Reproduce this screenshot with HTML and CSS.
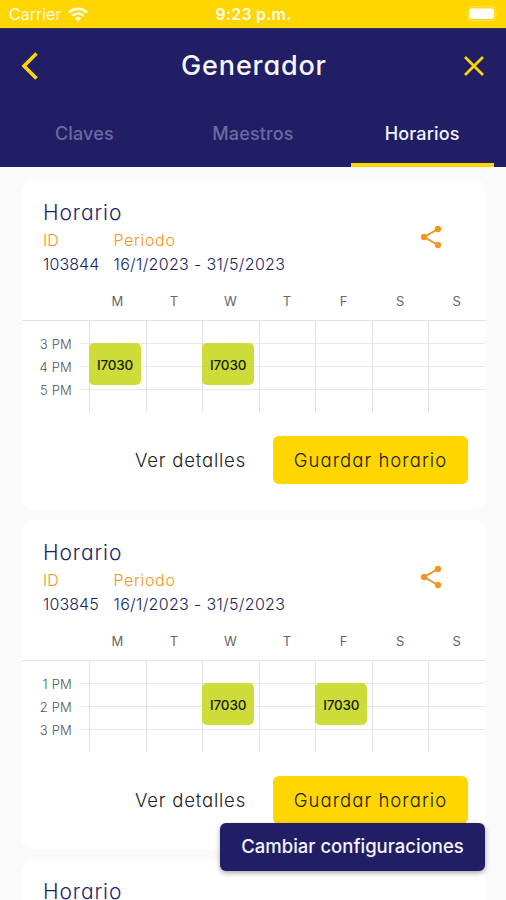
FILE: index.html
```html
<!DOCTYPE html>
<html lang="es">
<head>
<meta charset="utf-8">
<title>Generador</title>
<link rel="stylesheet" href="styles.css">
</head>
<body>
<div class="status">
  <span class="carrier">Carrier</span>
  <svg class="wifi" width="20" height="15" viewBox="0 0 20 15" fill="none" stroke="#fffbe6" stroke-width="2.7"><path d="M1 5.6a12.7 12.7 0 0 1 18 0M4.2 8.9a8.2 8.2 0 0 1 11.6 0"/><path d="M10 14.6l-3.3-3.4a4.7 4.7 0 0 1 6.6 0z" fill="#fffbe6" stroke="none"/></svg>
  <span class="time">9:23 p.m.</span>
  <svg class="battery" width="33" height="16" viewBox="0 0 33 16"><rect x="1.200" y=".7" width="28.600" height="14.100" rx="4.5" fill="none" stroke="#ffe660"/><rect x="3" y="2.5" width="25" height="10.5" rx="2.5" fill="#fff"/><path d="M31 5.200q2 2.500 0 5z" fill="#ffe660"/></svg>
</div>
<header class="header">
  <div class="bar">
    <svg width="20" height="28" viewBox="0 0 20 28" fill="none" stroke="#ffd600" stroke-width="3.6"><path d="M16.500 1.500L4 14l12.500 12.500"/></svg>
    <h1 class="title">Generador</h1>
    <svg width="20" height="20" viewBox="0 0 20 20" fill="none" stroke="#ffd600" stroke-width="2.700"><path d="M1 1l18 18M19 1L1 19"/></svg>
  </div>
  <nav class="tabs">
    <div class="tab"><span>Claves</span></div>
    <div class="tab"><span>Maestros</span></div>
    <div class="tab active"><span>Horarios</span></div>
  </nav>
</header>
<main class="list">
  <section class="card">
    <div class="info">
      <div>
        <h2 class="name">Horario</h2>
        <div class="meta"><span class="label">ID</span><span class="label period-label">Periodo</span><span class="value">103844</span><span class="value period">16/1/2023 - 31/5/2023</span></div>
      </div>
      <svg class="share" width="22" height="24" viewBox="0 0 22 24" fill="#f7941d" stroke="#f7941d"><path d="M18 4L4 12l14 8" fill="none" stroke-width="2"/><circle cx="18" cy="4" r="2.800"/><circle cx="4" cy="12" r="2.800"/><circle cx="18" cy="20" r="2.800"/></svg>
    </div>
    <div class="days"><i></i><span>M</span><span>T</span><span>W</span><span>T</span><span>F</span><span>S</span><span>S</span></div>
    <div class="schedule">
      <div class="hours"><span>3 PM</span><span>4 PM</span><span>5 PM</span></div>
      <div class="lines"><i></i><i></i><i></i></div>
      <div class="col"><b class="event">I7030</b></div><div class="col"></div><div class="col"><b class="event">I7030</b></div><div class="col"></div><div class="col"></div><div class="col"></div><div class="col"></div>
    </div>
    <div class="actions"><span class="details">Ver detalles</span><span class="save"><span>Guardar horario</span></span></div>
  </section>
  <section class="card">
    <div class="info">
      <div>
        <h2 class="name">Horario</h2>
        <div class="meta"><span class="label">ID</span><span class="label period-label">Periodo</span><span class="value">103845</span><span class="value period">16/1/2023 - 31/5/2023</span></div>
      </div>
      <svg class="share" width="22" height="24" viewBox="0 0 22 24" fill="#f7941d" stroke="#f7941d"><path d="M18 4L4 12l14 8" fill="none" stroke-width="2"/><circle cx="18" cy="4" r="2.800"/><circle cx="4" cy="12" r="2.800"/><circle cx="18" cy="20" r="2.800"/></svg>
    </div>
    <div class="days"><i></i><span>M</span><span>T</span><span>W</span><span>T</span><span>F</span><span>S</span><span>S</span></div>
    <div class="schedule">
      <div class="hours"><span>1 PM</span><span>2 PM</span><span>3 PM</span></div>
      <div class="lines"><i></i><i></i><i></i></div>
      <div class="col"></div><div class="col"></div><div class="col"><b class="event">I7030</b></div><div class="col"></div><div class="col"><b class="event">I7030</b></div><div class="col"></div><div class="col"></div>
    </div>
    <div class="actions"><span class="details">Ver detalles</span><span class="save"><span>Guardar horario</span></span></div>
  </section>
  <section class="card partial">
    <h2 class="name">Horario</h2>
  </section>
</main>
<div class="fab"><span>Cambiar configuraciones</span></div>
</body>
</html>
```
FILE: styles.css
```css
* { box-sizing: border-box; }
body { margin: 0; height: 900px; overflow: hidden; position: relative; background: #fafafa; font-family: Inter, "Liberation Sans", sans-serif; display: flex; flex-direction: column; white-space: nowrap; }
svg { display: block; flex: none; }
.status { height: 28px; flex: none; background: #ffd600; color: #fffbe6; display: grid; grid-template-columns: 60px 1fr auto 1fr 33px; align-items: center; padding: 0 7px 0 9px; font-size: 16px; line-height: 28px; }
.carrier { letter-spacing: 0; }
.wifi { margin-left: -1px; }
.time { grid-column: 3; font-weight: 600; letter-spacing: 0.2px; margin-left: -28px; }
.battery { grid-column: 5; }
.header { height: 139px; flex: none; background: #211e66; border-top: 1px solid #38305a; }
.bar { height: 74px; display: flex; align-items: center; justify-content: space-between; padding: 0 22px 0 20px; }
.title { margin: 0 0 0 4px; font-size: 27px; line-height: 36px; font-weight: 500; color: #f7f7ff; letter-spacing: 0.85px; font-feature-settings: "cv11"; }
.tabs { height: 64px; display: grid; grid-template-columns: repeat(3, 1fr); }
.tab { display: flex; justify-content: center; padding-top: 19px; font-size: 18px; line-height: 24px; font-weight: 500; letter-spacing: 0.15px; color: #6c6aa0; }
.active { color: #f5f5ff; margin: 0 12.500px 0 13.500px; border-bottom: 4px solid #ffd600; }
.list { flex: 1; min-height: 0; padding: 13px 21px 0 22px; display: flex; flex-direction: column; gap: 11px; font-feature-settings: "cv11"; }
.card { height: 329px; flex: none; background: #fff; border-radius: 10px; }
.partial { height: 40px; border-radius: 10px 10px 0 0; padding: 22px 21px 0; color: #211e66; }
.partial .name { line-height: 18px; height: 18px; padding-top: 1px; }
.info { height: 109px; padding: 19px 43px 0 21px; display: flex; justify-content: space-between; color: #211e66; }
.name { margin: 0; font-size: 21px; line-height: 28px; font-weight: 350; letter-spacing: 0.9px; }
.meta { display: grid; grid-template-columns: 70.500px auto; line-height: 24px; margin-top: 1px; font-size: 16px; font-weight: 300; letter-spacing: 0.1px; }
.period { letter-spacing: 0.34px; }
.period-label { letter-spacing: 0.65px; }
.label { color: #f7941d; }
.share { margin-top: 26px; }
.days { height: 32px; display: grid; grid-template-columns: 67px repeat(7, 1fr); border-bottom: 1px solid #e2e2e2; text-align: center; font-size: 13px; line-height: 25px; color: #666; }
.schedule { height: 91px; display: grid; grid-template-columns: 67px repeat(7, 1fr); position: relative; }
.hours { padding: 12px 17px 0 0; text-align: right; font-size: 13px; line-height: 23px; font-weight: 300; letter-spacing: 0.2px; color: #555; display: flex; flex-direction: column; }
.lines { position: absolute; left: 59px; right: 0; top: 0; display: grid; grid-auto-rows: 23px; }
.lines i { border-bottom: 1px solid #e8e8e8; }
.col { border-left: 1px solid #e2e2e2; padding-top: 22px; position: relative; }
.event { display: flex; width: 52px; height: 42px; margin-left: -1px; border-radius: 5px; background: #cddc39; color: #161a05; align-items: center; justify-content: center; font-size: 13.500px; font-weight: 500; letter-spacing: -0.2px; line-height: 20px; padding-top: 1px; }
.actions { display: flex; justify-content: flex-end; align-items: center; height: 72px; padding: 24px 17px 0 0; font-size: 18.500px; line-height: 48px; font-weight: 300; color: #222; gap: 27px; }
.details { letter-spacing: 0.8px; }
.save { width: 195px; height: 48px; border-radius: 6px; background: #ffd600; display: flex; justify-content: center; letter-spacing: 1.050px; }
.fab { position: absolute; left: 220px; top: 823px; width: 265px; height: 48px; border-radius: 6px; background: #211e66; color: #f5f5ff; display: flex; justify-content: center; font-size: 18.500px; line-height: 47px; font-weight: 500; box-shadow: 0 2px 5px rgba(0,0,0,.35); }
```
